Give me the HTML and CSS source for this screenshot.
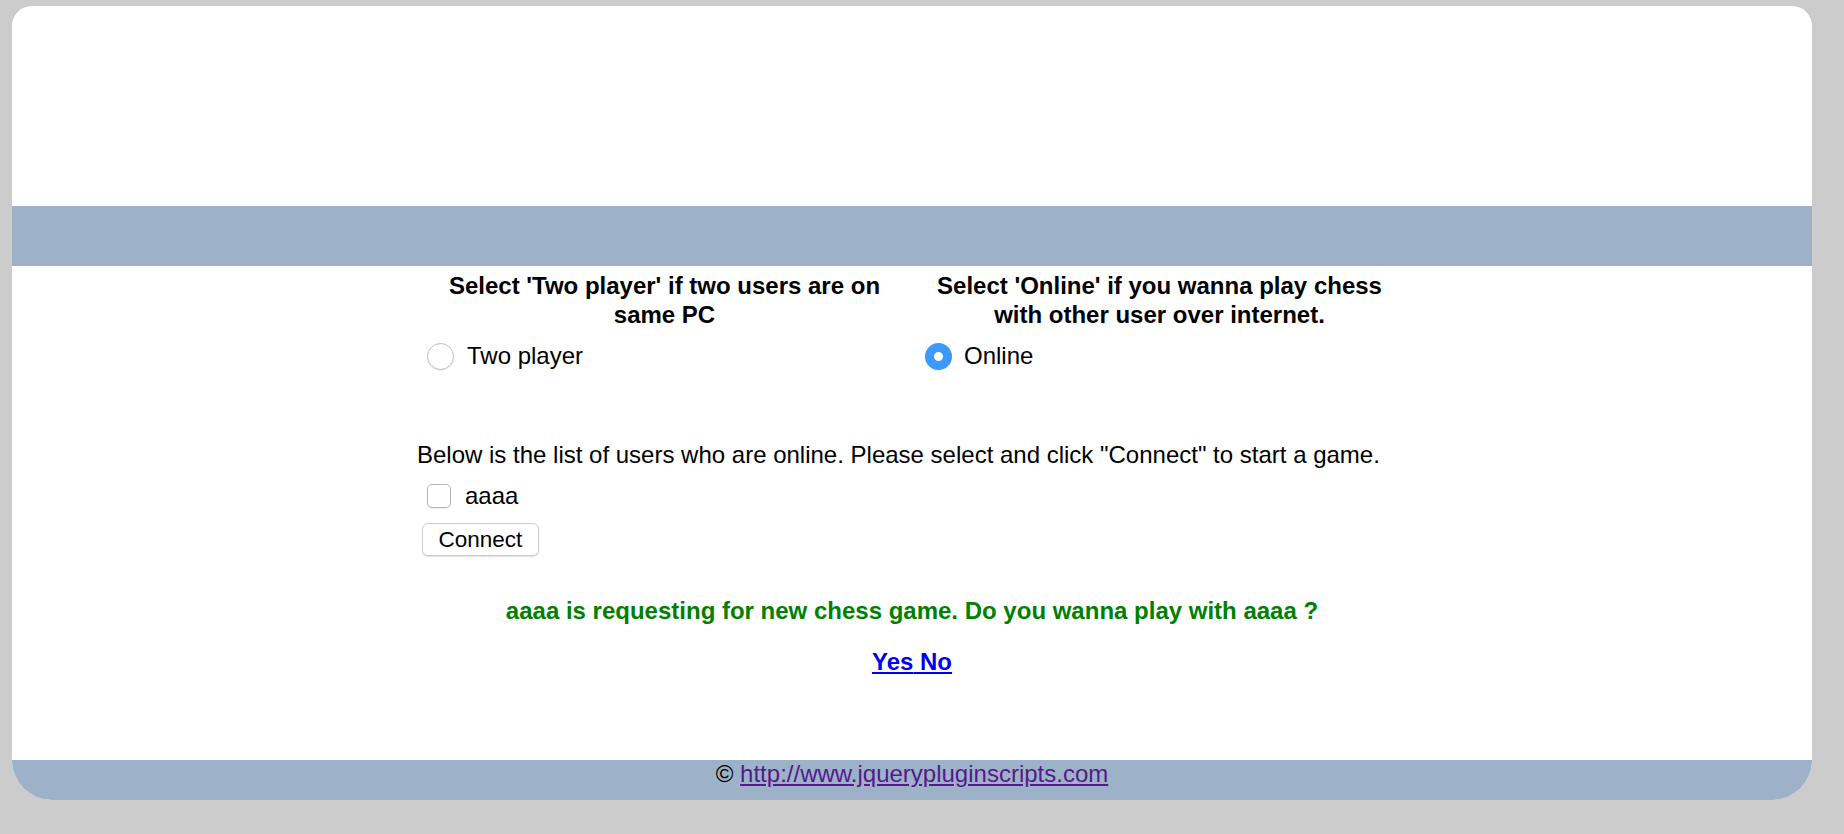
FILE: index.html
```html
<!DOCTYPE html>
<html>
<head>
<meta charset="utf-8">
<title>Chess</title>
<link rel="stylesheet" href="styles.css">
</head>
<body>
<div class="page">
  <div class="header"></div>
  <div class="nav"></div>
  <div class="content">
    <div class="main">
      <div class="options">
        <div class="option">
          <h4 class="option-title">Select 'Two player' if two users are on same PC</h4>
          <label class="radio-row"><input type="radio" name="mode" class="radio"><span>Two player</span></label>
        </div>
        <div class="option option-right">
          <h4 class="option-title">Select 'Online' if you wanna play chess with other user over internet.</h4>
          <label class="radio-row"><input type="radio" name="mode" class="radio" checked><span>Online</span></label>
        </div>
      </div>
      <p class="intro">Below is the list of users who are online. Please select and click "Connect" to start a game.</p>
      <label class="user-row"><input type="checkbox" class="check"><span>aaaa</span></label>
      <div class="btn-row"><button class="btn" type="button">Connect</button></div>
      <p class="request">aaaa is requesting for new chess game. Do you wanna play with aaaa ?</p>
      <p class="answer"><a href="#" class="answer-link">Yes</a><a href="#" class="answer-link"> No</a></p>
    </div>
  </div>
  <div class="footer">© <a href="#" class="footer-link">http://www.jquerypluginscripts.com</a></div>
</div>
</body>
</html>
```
FILE: styles.css
```css
html, body {
  margin: 0;
  padding: 0;
}
body {
  background: #cccccc;
  font-family: "Liberation Sans", Arial, sans-serif;
  font-size: 24px;
  line-height: 28px;
  color: #000;
  padding-top: 6px;
  height: 828px;
}
.page {
  width: 1800px;
  margin: 0 0 0 12px;
  background: #fff;
  border-radius: 20px 20px 40px 40px;
  overflow: hidden;
}
.header {
  height: 200px;
}
.nav {
  height: 60px;
  background: #9db2c9;
}
.content {
  padding-bottom: 84px;
}
.main {
  width: 990px;
  margin: 0 auto;
}
.options {
  display: grid;
  grid-template-columns: 495px 495px;
  padding-top: 5px;
}
.option {
  padding: 0 8px;
}
.option-title {
  margin: 0;
  font-size: 24px;
  line-height: 29px;
  font-weight: bold;
  text-align: center;
}
.radio-row {
  display: flex;
  align-items: center;
  height: 28px;
  margin-top: 13px;
}
.radio {
  appearance: none;
  -webkit-appearance: none;
  width: 27px;
  height: 27px;
  margin: 0 13px 0 2px;
  border-radius: 50%;
  border: 1px solid #bdbdbd;
  background: #fff;
  box-sizing: border-box;
  box-shadow: 0 1px 1px rgba(0,0,0,0.06);
  flex: none;
}
.option-right .radio {
  margin-left: 5px;
  margin-right: 12px;
}
.radio:checked {
  border: 9.5px solid #3d99fb;
  background: #fff;
}
.intro {
  margin: 71px 0 0 0;
}
.user-row {
  display: flex;
  align-items: center;
  height: 28px;
  margin-top: 13px;
}
.check {
  appearance: none;
  -webkit-appearance: none;
  width: 24px;
  height: 24px;
  margin: 0 14px 0 10px;
  border: 1px solid #b5b5b5;
  border-radius: 5px;
  background: #fff;
  box-sizing: border-box;
  box-shadow: 0 1px 1px rgba(0,0,0,0.06);
  flex: none;
}
.btn-row {
  margin-top: 13px;
  padding-left: 5px;
}
.btn {
  font-family: "Liberation Sans", Arial, sans-serif;
  font-size: 22.5px;
  line-height: 26px;
  height: 33px;
  padding: 0 15.5px;
  background: #fff;
  color: #000;
  border: 1px solid #cdcdcd;
  border-radius: 6px;
  box-shadow: 0 1px 1px rgba(0,0,0,0.12);
}
.request {
  margin: 41px 0 0 0;
  text-align: center;
  font-weight: bold;
  color: #008000;
}
.answer {
  margin: 23px 0 0 0;
  text-align: center;
  font-weight: bold;
}
.answer-link {
  color: #0000ee;
  text-decoration: underline;
}
.footer {
  height: 40px;
  background: #9db2c9;
  text-align: center;
}
.footer-link {
  color: #551a8b;
  text-decoration: underline;
}
```
